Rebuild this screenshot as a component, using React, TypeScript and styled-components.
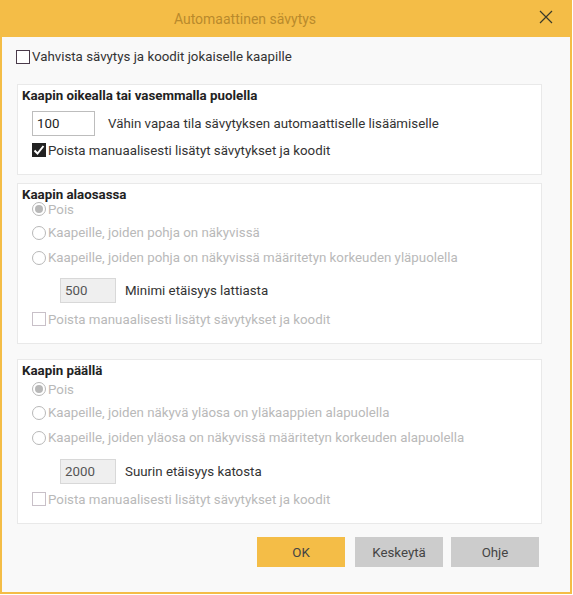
import React from "react";
import styled, { createGlobalStyle } from "styled-components";

const GlobalStyle = createGlobalStyle`
	html, body {
		margin: 0;
		padding: 0;
		background: #ffffff;
	}
	body {
		font-family: Roboto, "Liberation Sans", sans-serif;
		font-size: 13.3px;
		color: #333333;
	}
`;

const Frame = styled.div`
	width: 572px;
	height: 594px;
	box-sizing: border-box;
	border: 2px solid #f4bd47;
	border-top: none;
	background: #f9f9f9;
	display: flex;
	flex-direction: column;
`;

const TitleBar = styled.div`
	height: 37px;
	margin: 0 -2px;
	background: #f4bd47;
	display: flex;
	align-items: center;
	justify-content: center;
	position: relative;
`;

const Title = styled.div`
	font-size: 14px;
	color: #b98a2c;
	padding-right: 82px;
`;

const Close = styled.button`
	position: absolute;
	right: 18px;
	top: 9px;
	width: 16px;
	height: 16px;
	padding: 0;
	border: none;
	background: none;
	display: flex;
`;

const Body = styled.div`
	flex: 1;
	padding: 11px 28px 0 14px;
	display: flex;
	flex-direction: column;
`;

const Group = styled.div<{ $height: number; $gap?: number }>`
	height: ${(p) => p.$height}px;
	box-sizing: border-box;
	margin-left: 1px;
	margin-top: ${(p) => p.$gap ?? 8}px;
	background: #ffffff;
	border: 1px solid #e9e9e9;
	padding: 3px 0 0 4px;
	display: flex;
	flex-direction: column;
`;

const GroupTitle = styled.div`
	font-weight: bold;
	font-size: 13.3px;
	color: #222222;
	height: 16px;
	line-height: 16px;
`;

const Row = styled.label<{ $indent?: number; $height?: number; $disabled?: boolean }>`
	display: flex;
	align-items: center;
	gap: 2px;
	height: ${(p) => p.$height ?? 22}px;
	padding-left: ${(p) => p.$indent ?? 0}px;
	color: ${(p) => (p.$disabled ? "#b9b9b9" : "#333333")};
	white-space: nowrap;
`;

const Box = styled.span<{ $disabled?: boolean }>`
	width: 14px;
	height: 14px;
	box-sizing: border-box;
	border: 1px solid ${(p) => (p.$disabled ? "#c8c0c8" : "#4a3a4a")};
	background: #ffffff;
	display: inline-flex;
	align-items: center;
	justify-content: center;
	flex-shrink: 0;
`;

const CheckedBox = styled(Box)`
	background: #222222;
	border-color: #222222;
`;

const Radio = styled.span<{ $on?: boolean }>`
	width: 14px;
	height: 14px;
	box-sizing: border-box;
	border-radius: 50%;
	border: 1px solid #b8b8b8;
	background: #ffffff;
	display: inline-flex;
	align-items: center;
	justify-content: center;
	flex-shrink: 0;
	&::after {
		content: "";
		display: ${(p) => (p.$on ? "block" : "none")};
		width: 8px;
		height: 8px;
		border-radius: 50%;
		background: #b8b8b8;
	}
`;

const Input = styled.div<{ $disabled?: boolean; $width: number }>`
	width: ${(p) => p.$width}px;
	height: 25px;
	box-sizing: border-box;
	border: 1px solid ${(p) => (p.$disabled ? "#d8d8d8" : "#bdbdbd")};
	background: ${(p) => (p.$disabled ? "#efefef" : "#ffffff")};
	color: ${(p) => (p.$disabled ? "#555555" : "#222222")};
	padding-left: 4px;
	display: flex;
	align-items: center;
	font-size: 13.3px;
	flex-shrink: 0;
`;

const FieldRow = styled.div<{ $indent: number; $gap: number }>`
	display: flex;
	align-items: center;
	height: 25px;
	padding-left: ${(p) => p.$indent}px;
	gap: ${(p) => p.$gap}px;
	color: #333333;
`;

const Spacer = styled.div<{ $h: number }>`
	height: ${(p) => p.$h}px;
	flex-shrink: 0;
`;

const Buttons = styled.div`
	display: flex;
	justify-content: flex-end;
	margin-top: 13px;
	margin-right: 3px;
`;

const Button = styled.button<{ $primary?: boolean; $gap?: number }>`
	width: 88px;
	height: 30px;
	margin-left: ${(p) => p.$gap ?? 0}px;
	border: none;
	background: ${(p) => (p.$primary ? "#f4bd47" : "#cccccc")};
	color: #444444;
	font-family: Roboto, "Liberation Sans", sans-serif;
	font-size: 13.3px;
	padding: 0;
`;

const Tick = () => (
	<svg width="12" height="12" viewBox="0 0 12 12">
		<path d="M1.5 6.5 L4.5 9.5 L10.5 2" fill="none" stroke="#ffffff" strokeWidth="2" />
	</svg>
);

const XIcon = () => (
	<svg width="16" height="16" viewBox="0 0 16 16">
		<path d="M2 2 L14 14 M14 2 L2 14" stroke="#3a3a2a" strokeWidth="1.2" />
	</svg>
);

export default function App() {
	return (
		<>
			<GlobalStyle />
			<Frame>
				<TitleBar>
					<Title>Automaattinen sävytys</Title>
					<Close aria-label="close">
						<XIcon />
					</Close>
				</TitleBar>
				<Body>
					<Row $height={17}>
						<Box />
						Vahvista sävytys ja koodit jokaiselle kaapille
					</Row>

					<Group $height={91} $gap={19}>
						<GroupTitle>Kaapin oikealla tai vasemmalla puolella</GroupTitle>
						<Spacer $h={7} />
						<FieldRow $indent={10} $gap={13}>
							<Input $width={63}>100</Input>
							Vähin vapaa tila sävytyksen automaattiselle lisäämiselle
						</FieldRow>
						<Spacer $h={3} />
						<Row $indent={10}>
							<CheckedBox>
								<Tick />
							</CheckedBox>
							Poista manuaalisesti lisätyt sävytykset ja koodit
						</Row>
					</Group>

					<Group $height={161} $gap={8}>
						<GroupTitle>Kaapin alaosassa</GroupTitle>
						<Row $indent={10} $height={12} $disabled>
							<Radio $on />
							Pois
						</Row>
						<Spacer $h={5} />
						<Row $indent={10} $height={25} $disabled>
							<Radio />
							Kaapeille, joiden pohja on näkyvissä
						</Row>
						<Row $indent={10} $height={25} $disabled>
							<Radio />
							Kaapeille, joiden pohja on näkyvissä määritetyn korkeuden yläpuolella
						</Row>
						<Spacer $h={8} />
						<FieldRow $indent={38} $gap={9}>
							<Input $width={56} $disabled>
								500
							</Input>
							Minimi etäisyys lattiasta
						</FieldRow>
						<Spacer $h={5} />
						<Row $indent={10} $disabled>
							<Box $disabled />
							Poista manuaalisesti lisätyt sävytykset ja koodit
						</Row>
					</Group>

					<Group $height={165} $gap={15}>
						<GroupTitle>Kaapin päällä</GroupTitle>
						<Row $indent={10} $height={20} $disabled>
							<Radio $on />
							Pois
						</Row>
						<Spacer $h={1} />
						<Row $indent={10} $height={25} $disabled>
							<Radio />
							Kaapeille, joiden näkyvä yläosa on yläkaappien alapuolella
						</Row>
						<Row $indent={10} $height={25} $disabled>
							<Radio />
							Kaapeille, joiden yläosa on näkyvissä määritetyn korkeuden alapuolella
						</Row>
						<Spacer $h={9} />
						<FieldRow $indent={38} $gap={9}>
							<Input $width={56} $disabled>
								2000
							</Input>
							Suurin etäisyys katosta
						</FieldRow>
						<Spacer $h={4} />
						<Row $indent={10} $disabled>
							<Box $disabled />
							Poista manuaalisesti lisätyt sävytykset ja koodit
						</Row>
					</Group>

					<Buttons>
						<Button $primary>OK</Button>
						<Button $gap={10}>Keskeytä</Button>
						<Button $gap={8}>Ohje</Button>
					</Buttons>
				</Body>
			</Frame>
		</>
	);
}
